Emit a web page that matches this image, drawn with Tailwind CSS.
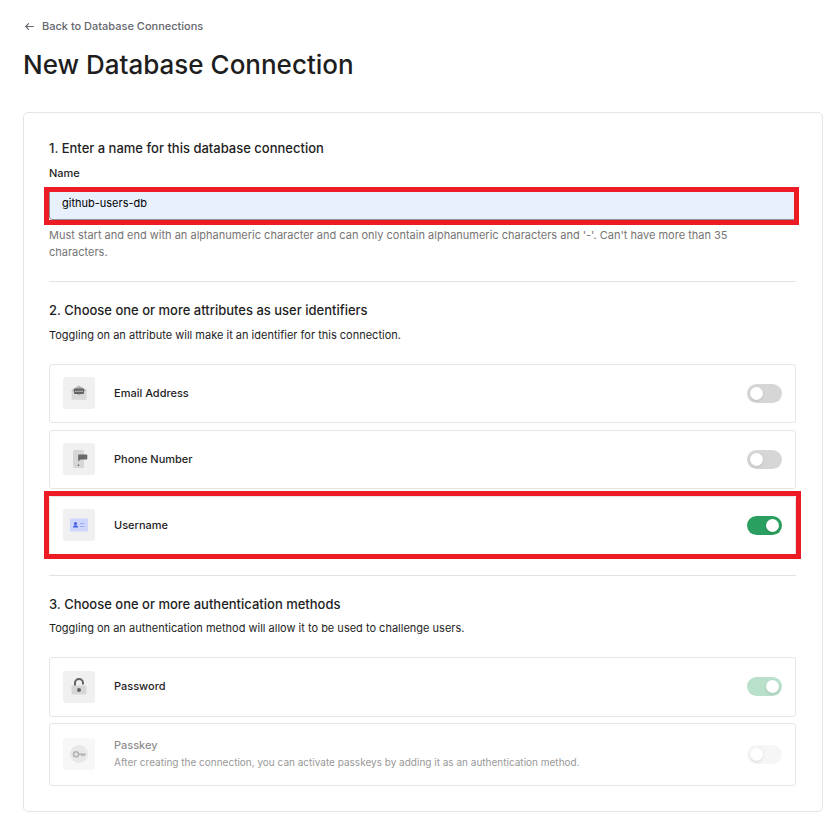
<!DOCTYPE html>
<html lang="en">
<head>
<meta charset="utf-8">
<meta name="viewport" content="width=device-width, initial-scale=1">
<title>New Database Connection</title>
<script src="https://cdn.jsdelivr.net/npm/@tailwindcss/browser@4"></script>
</head>
<body class="bg-white font-['Inter','Liberation_Sans',sans-serif] text-[11px] leading-[17px] text-[#1e1e1e]">
<main class="pt-[17px] pb-[7px] pl-[23px] pr-[7px]">
  <a href="#" class="inline-flex items-center gap-2 pl-[2px] text-[#65676e] font-medium leading-[18px]">
    <svg class="w-[9px] h-[9px]" viewBox="0 0 9 9" fill="none" stroke="currentColor" stroke-width="1.1" stroke-linecap="round" stroke-linejoin="round" aria-hidden="true"><path d="M8.4 4.5H.8M3.6 1.6L.7 4.5l2.9 2.9"/></svg>
    Back to Database Connections
  </a>
  <h1 class="mt-[13px] text-[26px] leading-[32px] font-[450] text-[#1e1e1e]">New Database Connection</h1>

  <form class="mt-[31px] rounded-[5px] border border-[#e5e5e5] pt-[25px] pb-[25px] pl-[25px] pr-[26px]">
    <section class="border-b border-[#e3e3e3] pb-[20px]">
      <h2 class="text-[13px] leading-[20px] font-medium">1. Enter a name for this database connection</h2>
      <label for="name" class="mt-[7px] block font-medium">Name</label>
      <div class="relative mt-[5px]">
        <input id="name" type="text" value="github-users-db" class="block h-[33px] w-full rounded-[3px] border border-[#8e929c] bg-[#e8f0fe] px-[12px] text-[11px] text-black outline-none">
        <span class="pointer-events-none absolute top-0 -left-[5px] -right-[3px] h-[38px] border-[5px] border-[#ed1c24]"></span>
      </div>
      <p class="mt-[7px] max-w-[700px] text-[#747474]">Must start and end with an alphanumeric character and can only contain alphanumeric characters and '-'. Can't have more than 35 characters.</p>
    </section>

    <section class="border-b border-[#e3e3e3] pt-[18px] pb-[20px]">
      <h2 class="text-[13px] leading-[20px] font-medium">2. Choose one or more attributes as user identifiers</h2>
      <p class="mt-[7px]">Toggling on an attribute will make it an identifier for this connection.</p>
      <div class="mt-[20px] flex flex-col gap-[7px]">
        <div class="flex min-h-[59px] items-center rounded-[3px] border border-[#e5e5e5] px-[13px]">
          <span class="flex size-[32px] shrink-0 items-center justify-center rounded-[3px] bg-[#f0f0f0]">
            <svg class="size-[20px]" viewBox="0 0 20 20" aria-hidden="true"><path d="M2.5 7h15v8.800a1 1 0 0 1-1 1h-13a1 1 0 0 1-1-1z" fill="#d8d8d8"/><path d="M2.500 7L10 2.500 17.500 7 10 12.500z" fill="#b5b5b5"/><rect x="5" y="5.500" width="10" height="5.500" rx="1" fill="#636363"/><path d="M6.300 7.700h1.200v1.200H6.300zM8.400 7.700h1.200v1.200H8.400zM10.500 7.700h1.200v1.200h-1.200zM12.600 7.700h1.200v1.200h-1.200z" fill="#d4d4d4"/></svg>
          </span>
          <label for="email" class="ml-[19px] flex-1 font-medium">Email Address</label>
          <input id="email" type="checkbox" role="switch" class="relative h-[19px] w-[35px] shrink-0 appearance-none rounded-full bg-[#d6d6d6] before:absolute before:top-[3px] before:left-[3px] before:size-[13px] before:rounded-full before:bg-white before:shadow-sm checked:bg-[#2a9f5f] checked:before:left-[19px]">
        </div>
        <div class="flex min-h-[59px] items-center rounded-[3px] border border-[#e5e5e5] px-[13px]">
          <span class="flex size-[32px] shrink-0 items-center justify-center rounded-[3px] bg-[#f0f0f0]">
            <svg class="size-[20px]" viewBox="0 0 20 20" aria-hidden="true"><rect x="4" y="1" width="11" height="18" rx="1.500" fill="#d6d6d6"/><path d="M9.500 5.500h8a.8.8 0 0 1 .8.8v3.500a.8.8 0 0 1-.8.800h-6L9.200 12.500V6z" fill="#686868"/><circle cx="9.500" cy="16.200" r=".9" fill="#777"/></svg>
          </span>
          <label for="phone" class="ml-[19px] flex-1 font-medium">Phone Number</label>
          <input id="phone" type="checkbox" role="switch" class="relative h-[19px] w-[35px] shrink-0 appearance-none rounded-full bg-[#d6d6d6] before:absolute before:top-[3px] before:left-[3px] before:size-[13px] before:rounded-full before:bg-white before:shadow-sm checked:bg-[#2a9f5f] checked:before:left-[19px]">
        </div>
        <div class="relative flex min-h-[59px] items-center rounded-[3px] border border-[#e5e5e5] px-[13px]">
          <span class="flex size-[32px] shrink-0 items-center justify-center rounded-[3px] bg-[#f0f0f0]">
            <svg class="size-[20px]" viewBox="0 0 20 20" aria-hidden="true"><rect x="1" y="3.500" width="18" height="13" rx="1" fill="#cfd6fb"/><circle cx="6.500" cy="8.500" r="1.500" fill="#3f59e4"/><path d="M4 12.500c0-1.500 1-2.300 2.500-2.300S9 11 9 12.500z" fill="#3f59e4"/><path d="M11 8.500h4.500M11 11.500h4.500" stroke="#99a8f5" stroke-width="1.200"/></svg>
          </span>
          <label for="username" class="ml-[19px] flex-1 font-medium">Username</label>
          <input id="username" type="checkbox" role="switch" checked class="relative h-[19px] w-[35px] shrink-0 appearance-none rounded-full bg-[#d6d6d6] before:absolute before:top-[3px] before:left-[3px] before:size-[13px] before:rounded-full before:bg-white before:shadow-sm checked:bg-[#2a9f5f] checked:before:left-[19px]">
          <span class="pointer-events-none absolute -inset-x-[6px] -top-[6px] -bottom-[5px] border-[5px] border-[#ed1c24]"></span>
        </div>
      </div>
    </section>

    <section class="pt-[18px]">
      <h2 class="text-[13px] leading-[20px] font-medium">3. Choose one or more authentication methods</h2>
      <p class="mt-[6px]">Toggling on an authentication method will allow it to be used to challenge users.</p>
      <div class="mt-[20px] flex flex-col gap-[6px]">
        <div class="flex min-h-[60px] items-center rounded-[3px] border border-[#e5e5e5] px-[13px]">
          <span class="flex size-[32px] shrink-0 items-center justify-center rounded-[3px] bg-[#f0f0f0]">
            <svg class="size-[20px]" viewBox="0 0 20 20" aria-hidden="true"><rect x="2.500" y="8.500" width="15" height="9" rx="1" fill="#d6d6d6"/><path d="M6 8.500V6a4 4 0 0 1 8 0v1.500" fill="none" stroke="#636363" stroke-width="2"/><circle cx="10" cy="13" r="2" fill="#636363"/></svg>
          </span>
          <label for="password" class="ml-[19px] flex-1 font-medium">Password</label>
          <input id="password" type="checkbox" role="switch" checked disabled class="relative h-[19px] w-[35px] shrink-0 appearance-none rounded-full bg-[#d6d6d6] before:absolute before:top-[3px] before:left-[3px] before:size-[13px] before:rounded-full before:bg-white before:shadow-sm checked:bg-[#b8e0ca] checked:before:left-[19px]">
        </div>
        <div class="flex min-h-[63px] items-center rounded-[3px] border border-[#e5e5e5] px-[13px]">
          <span class="flex size-[32px] shrink-0 items-center justify-center rounded-[3px] bg-[#f7f7f7]">
            <svg class="size-[20px]" viewBox="0 0 20 20" aria-hidden="true"><circle cx="10" cy="10" r="9" fill="#e8e8e8"/><circle cx="7" cy="10.300" r="2.500" fill="none" stroke="#b1b1b1" stroke-width="1.500"/><path d="M9.500 10.300H16.500M12.800 10.300v2M15 10.300v2" fill="none" stroke="#b1b1b1" stroke-width="1.500"/></svg>
          </span>
          <div class="ml-[19px] flex-1">
            <label for="passkey" class="block font-medium text-[#8e8e8e]">Passkey</label>
            <p class="text-[10px] text-[#989898]">After creating the connection, you can activate passkeys by adding it as an authentication method.</p>
          </div>
          <input id="passkey" type="checkbox" role="switch" disabled class="relative h-[19px] w-[35px] shrink-0 appearance-none rounded-full bg-[#f6f6f6] before:absolute before:top-[3px] before:left-[3px] before:size-[13px] before:rounded-full before:bg-white before:shadow-sm">
        </div>
      </div>
    </section>
  </form>
</main>
</body>
</html>
